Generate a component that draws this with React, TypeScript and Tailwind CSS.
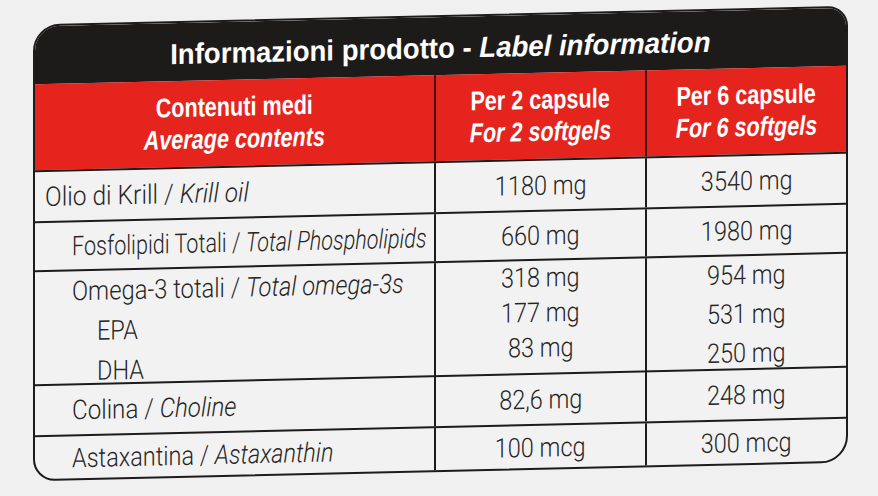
const ink = "text-[#262626]";

function Sq({ children, s = "scale-x-[0.87]", o = "origin-left" }: { children: React.ReactNode; s?: string; o?: string }) {
  return <span className={`inline-block whitespace-nowrap ${s} ${o}`}>{children}</span>;
}

function Label({ it, en, pad, s }: { it: string; en: string; pad: string; s?: string }) {
  return (
    <div className={`flex items-center border-r-2 border-[#1d1b1b] pt-[2px] ${pad}`}>
      <Sq s={s}>
        {it} / <i>{en}</i>
      </Sq>
    </div>
  );
}

function Val({ v, last }: { v: string; last?: boolean }) {
  return (
    <div className={`flex items-center justify-center pt-[2px] ${last ? "" : "border-r-2 border-[#1d1b1b]"}`}>
      <Sq s="scale-x-[0.87]" o="origin-center">
        {v}
      </Sq>
    </div>
  );
}

export default function App() {
  const row = "grid grid-cols-[401px_211px_1fr] border-t-2 border-[#1d1b1b]";
  return (
    <div className="w-[878px] h-[496px] overflow-hidden bg-[#f0f0f0] pt-[15px] pl-[33px] font-['Liberation_Sans',Arial,sans-serif]">
      <div className="w-[815px] h-[457px] skew-y-[-1.3deg] flex flex-col overflow-hidden border-2 border-[#1d1b1b] bg-[#f2f2f2] rounded-tl-[27px] rounded-tr-[20px] rounded-br-[27px] rounded-bl-[22px]">
        <div className="h-[58px] shrink-0 bg-[#1d1a1a] flex items-center justify-center pt-[5px] text-white text-[29px] font-bold">
          <Sq s="scale-x-[0.95]" o="origin-center">
            Informazioni prodotto - <i>Label information</i>
          </Sq>
        </div>
        <div className="h-[86px] shrink-0 grid grid-cols-[401px_211px_1fr] bg-[#e6241e] text-white text-[27px] font-bold leading-[32px]">
          {[
            ["Contenuti medi", "Average contents"],
            ["Per 2 capsule", "For 2 softgels"],
            ["Per 6 capsule", "For 6 softgels"],
          ].map(([a, b], i) => (
            <div
              key={a}
              className={`flex flex-col items-center justify-center ${i < 2 ? "border-r-2 border-[#4a1010]" : ""}`}
            >
              <Sq s="scale-x-[0.8]" o="origin-center">{a}</Sq>
              <Sq s="scale-x-[0.8]" o="origin-center"><i>{b}</i></Sq>
            </div>
          ))}
        </div>

        <div className={`flex-1 flex flex-col text-[27px] font-light font-['Roboto','Liberation_Sans',sans-serif] ${ink}`}>
          <div className={`${row} h-[51px]`}>
            <Label it="Olio di Krill" en="Krill oil" pad="pl-[10px]" s="scale-x-[0.91]" />
            <Val v="1180 mg" />
            <Val v="3540 mg" last />
          </div>
          <div className={`${row} h-[49px]`}>
            <Label it="Fosfolipidi Totali" en="Total Phospholipids" pad="pl-[37px]" s="scale-x-[0.8]" />
            <Val v="660 mg" />
            <Val v="1980 mg" last />
          </div>
          <div className={`${row} h-[114px]`}>
            <div className="flex flex-col border-r-2 border-[#1d1b1b] leading-[40px]">
              <div className="pl-[37px]">
                <Sq s="scale-x-[0.88]">
                  Omega-3 totali / <i>Total omega-3s</i>
                </Sq>
              </div>
              <div className="pl-[62px]">
                <Sq>EPA</Sq>
              </div>
              <div className="pl-[62px]">
                <Sq>DHA</Sq>
              </div>
            </div>
            <div className="flex flex-col items-center border-r-2 border-[#1d1b1b] leading-[35px]">
              {["318 mg", "177 mg", "83 mg"].map((v) => (
                <Sq key={v} s="scale-x-[0.87]" o="origin-center">{v}</Sq>
              ))}
            </div>
            <div className="flex flex-col items-center leading-[39px]">
              {["954 mg", "531 mg", "250 mg"].map((v) => (
                <Sq key={v} s="scale-x-[0.87]" o="origin-center">{v}</Sq>
              ))}
            </div>
          </div>
          <div className={`${row} h-[51px]`}>
            <Label it="Colina" en="Choline" pad="pl-[37px]" s="scale-x-[0.895]" />
            <Val v="82,6 mg" />
            <Val v="248 mg" last />
          </div>
          <div className={`${row} flex-1`}>
            <Label it="Astaxantina" en="Astaxanthin" pad="pl-[37px]" s="scale-x-[0.87]" />
            <Val v="100 mcg" />
            <Val v="300 mcg" last />
          </div>
        </div>
      </div>
    </div>
  );
}
